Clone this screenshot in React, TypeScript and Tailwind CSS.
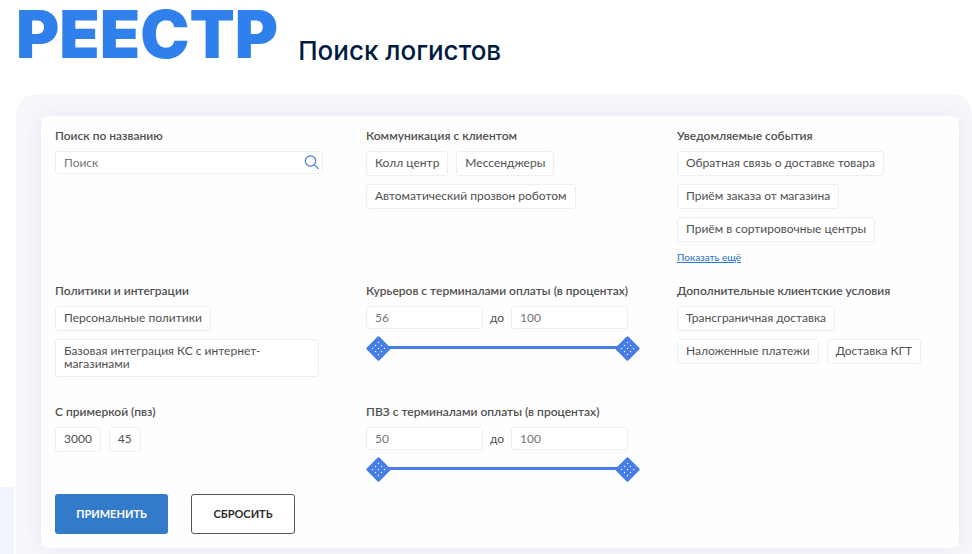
import { useState } from "react";
import type { ReactNode } from "react";

const DOTS = [
  [12.5, 6.5],
  [9.5, 9.5],
  [15.5, 9.5],
  [6.5, 12.5],
  [12.5, 12.5],
  [18.5, 12.5],
  [9.5, 15.5],
  [15.5, 15.5],
  [12.5, 18.5],
];

const Field = ({ title, children }: { title: string; children: ReactNode }) => (
  <section>
    <h2 className="mb-[7px] text-xs leading-4 font-semibold whitespace-nowrap text-[#505050]">
      {title}
    </h2>
    {children}
  </section>
);

const Chips = ({ items }: { items: string[] }) => {
  const [active, setActive] = useState<string[]>([]);

  const toggle = (item: string) =>
    setActive((prev) =>
      prev.includes(item) ? prev.filter((i) => i !== item) : [...prev, item]
    );

  return (
    <div className="mb-2 flex flex-wrap gap-2">
      {items.map((item) => (
        <button
          key={item}
          type="button"
          aria-pressed={active.includes(item)}
          onClick={() => toggle(item)}
          className="max-w-[264px] rounded-[3px] border border-[#eceef2] bg-white px-2 pt-1 pb-1.5 text-left text-xs leading-[13px] text-[#505050] aria-pressed:border-[#4a80e8]"
        >
          {item}
        </button>
      ))}
    </div>
  );
};

const Thumb = () => (
  <svg width="25" height="25" viewBox="0 0 25 25" aria-hidden="true">
    <rect
      x="3.5"
      y="3.5"
      width="18"
      height="18"
      rx="1.5"
      transform="rotate(45 12.5 12.5)"
      fill="#467de6"
    />
    {DOTS.map(([cx, cy]) => (
      <circle key={`${cx}-${cy}`} cx={cx} cy={cy} r="0.7" fill="#fff" />
    ))}
  </svg>
);

const numberInput =
  "h-[23px] min-w-0 flex-1 rounded-[3px] border border-[#eceef2] bg-white px-2 text-xs text-[#505050] outline-none placeholder:text-[#757575]";

const RangeField = ({ title, min, max }: { title: string; min: number; max: number }) => {
  const [from, setFrom] = useState(min);
  const [to, setTo] = useState(max);
  const percent = (value: number) => ((value - min) / (max - min)) * 100;

  return (
    <Field title={title}>
      <div className="mr-[6px] flex items-center gap-[7px]">
        <input aria-label={`${title}, от`} placeholder={String(from)} className={numberInput} />
        <span className="text-xs leading-4 text-[#505050]">до</span>
        <input aria-label={`${title}, до`} placeholder={String(to)} className={numberInput} />
      </div>
      <div className="relative -mr-[6px] mt-[7px] h-[25px]">
        <div className="absolute inset-x-3 top-[10px] h-[3px] rounded bg-[#467de6]" />
        <div className="absolute inset-y-0 right-[25px] left-0">
          <span className="absolute top-0" style={{ left: `${percent(from)}%` }}>
            <Thumb />
          </span>
          <span className="absolute top-0" style={{ left: `${percent(to)}%` }}>
            <Thumb />
          </span>
        </div>
        <input
          type="range"
          aria-label={`${title}, минимум`}
          min={min}
          max={max}
          value={from}
          onChange={(e) => setFrom(Math.min(Number(e.target.value), to))}
          className="absolute inset-y-0 left-0 w-1/2 opacity-0"
        />
        <input
          type="range"
          aria-label={`${title}, максимум`}
          min={min}
          max={max}
          value={to}
          onChange={(e) => setTo(Math.max(Number(e.target.value), from))}
          className="absolute inset-y-0 right-0 w-1/2 opacity-0"
        />
      </div>
    </Field>
  );
};

export default function App() {
  return (
    <div className="relative flex min-h-screen flex-col bg-white font-['Lato','Noto_Sans',sans-serif]">
      <div className="absolute bottom-0 left-0 h-[67px] w-[14px] bg-[#f0f5fd]" />

      <header className="flex h-[94px] items-start gap-5 pl-4 font-['Inter',sans-serif]">
        <span className="text-[66px] leading-[68px] font-black text-[#2f80ed]">
          РЕЕСТР
        </span>
        <h1 className="pt-[33px] text-[26px] leading-9 font-medium whitespace-nowrap text-[#001b40]">
          Поиск логистов
        </h1>
      </header>

      <main className="relative ml-4 flex-1 rounded-t-[20px] bg-[#f6f7fb] pt-[22px] pr-[13px] pb-[6px] pl-[25px]">
        <form
          onSubmit={(e) => e.preventDefault()}
          className="rounded-lg bg-[#fefefe] px-[14px] pt-3 pb-[14px] shadow-[0_0_20px_rgba(40,50,90,0.07)]"
        >
          <div className="grid gap-x-[43px] gap-y-[19px] md:grid-cols-3">
            <Field title="Поиск по названию">
              <div className="relative">
                <input
                  type="search"
                  aria-label="Поиск по названию"
                  placeholder="Поиск"
                  className="block h-[23px] w-full rounded-[3px] border border-[#eceef2] bg-white pr-7 pl-2 text-xs text-[#505050] outline-none placeholder:text-[#757575]"
                />
                <svg
                  className="absolute top-1 right-1"
                  width="15"
                  height="15"
                  viewBox="0 0 15 15"
                  fill="none"
                  stroke="#3f7be0"
                  strokeWidth="1.2"
                  strokeLinecap="round"
                  aria-hidden="true"
                >
                  <circle cx="6.5" cy="6" r="5.2" />
                  <path d="M10.4 9.9 14.2 13.7" />
                </svg>
              </div>
            </Field>

            <Field title="Коммуникация с клиентом">
              <Chips items={["Колл центр", "Мессенджеры", "Автоматический прозвон роботом"]} />
            </Field>

            <Field title="Уведомляемые события">
              <Chips
                items={[
                  "Обратная связь о доставке товара",
                  "Приём заказа от магазина",
                  "Приём в сортировочные центры",
                ]}
              />
              <a href="#events" className="block w-fit text-[10px] leading-[14px] font-medium text-[#3079cf] underline">
                Показать ещё
              </a>
            </Field>

            <Field title="Политики и интеграции">
              <Chips items={["Персональные политики", "Базовая интеграция КС с интернет-магазинами"]} />
            </Field>

            <RangeField title="Курьеров с терминалами оплаты (в процентах)" min={56} max={100} />

            <Field title="Дополнительные клиентские условия">
              <Chips items={["Трансграничная доставка", "Наложенные платежи", "Доставка КГТ"]} />
            </Field>

            <Field title="С примеркой (пвз)">
              <Chips items={["3000", "45"]} />
            </Field>

            <RangeField title="ПВЗ с терминалами оплаты (в процентах)" min={50} max={100} />
          </div>

          <div className="mt-3 flex gap-[23px]">
            <button
              type="submit"
              className="h-10 w-[113px] rounded-[3px] bg-[#347acb] text-[11px] font-bold text-white"
            >
              ПРИМЕНИТЬ
            </button>
            <button
              type="reset"
              className="h-10 w-[104px] rounded-[3px] border border-[#555] bg-white text-[11px] font-bold text-[#2b2b2b]"
            >
              СБРОСИТЬ
            </button>
          </div>
        </form>
      </main>
    </div>
  );
}
